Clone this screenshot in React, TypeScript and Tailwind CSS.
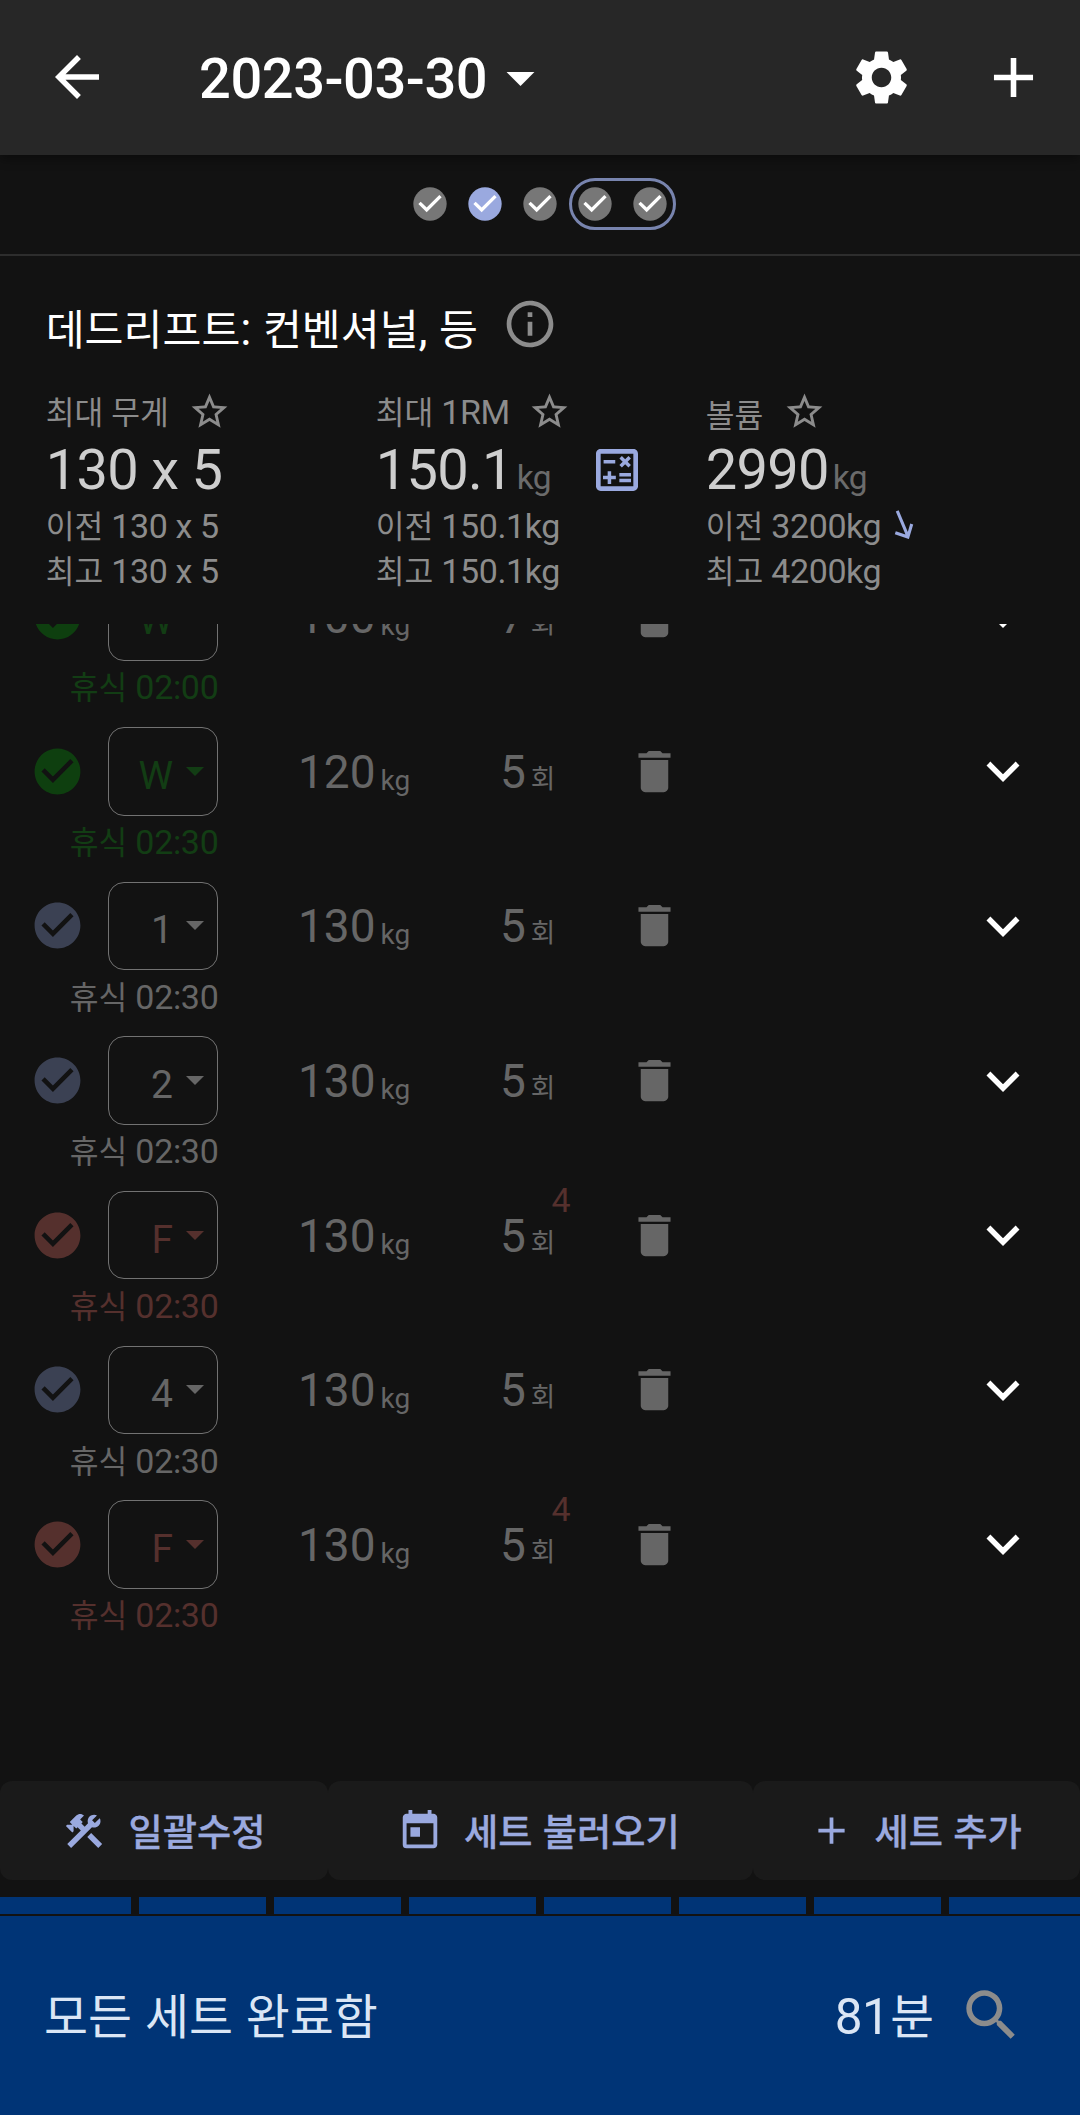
import React from "react";
import {
  MdAdd,
  MdArrowBack,
  MdArrowDropDown,
  MdCheckCircle,
  MdDelete,
  MdExpandMore,
  MdInfoOutline,
  MdOutlineCalculate,
  MdSearch,
  MdSettings,
  MdStarBorder,
  MdToday,
} from "react-icons/md";

/* Latin text is set in Roboto; Hangul runs use a slightly smaller Noto Sans. */
function T({ children }: { children: string }) {
  return (
    <>
      {children.split(/([\uac00-\ud7a3]+)/).map((part, i) =>
        i % 2 === 1 ? (
          <span
            key={i}
            className="font-['Noto_Sans_CJK_KR',sans-serif] text-[0.92em] leading-[0] tracking-normal"
          >
            {part}
          </span>
        ) : (
          part
        ),
      )}
    </>
  );
}

function Dot({ active = false }: { active?: boolean }) {
  return (
    <span
      className={
        active
          ? "flex size-10 items-center justify-center text-[#9aa9df]"
          : "flex size-10 items-center justify-center text-[#777777]"
      }
    >
      <svg viewBox="0 0 24 24" className="size-10">
        <circle cx="12" cy="12" r="10" fill="currentColor" />
        <path d="m10 17-5-5 1.41-1.41L10 14.17l7.59-7.59L19 8z" fill="#ffffff" />
      </svg>
    </span>
  );
}

function HammerWrench() {
  return (
    <svg viewBox="0 0 24 24" className="size-[44px]" fill="currentColor">
      <path d="M13.78 15.3L19.78 21.3L21.89 19.14L15.89 13.14L13.78 15.3M17.5 10.1C17.11 10.1 16.69 10.05 16.36 9.91L4.97 21.25L2.86 19.14L10.27 11.74L8.5 9.96L7.78 10.66L6.33 9.25V12.11L5.63 12.81L2.11 9.25L2.81 8.55H5.62L4.22 7.14L7.78 3.58C8.95 2.41 10.83 2.41 12 3.58L9.89 5.74L11.3 7.14L10.59 7.85L12.38 9.63L14.2 7.75C14.06 7.42 14 7 14 6.63C14 4.66 15.56 3.11 17.5 3.11C18.09 3.11 18.61 3.25 19.08 3.53L16.41 6.2L17.91 7.7L20.58 5.03C20.86 5.5 21 6 21 6.63C21 8.55 19.45 10.1 17.5 10.1Z" />
    </svg>
  );
}

function Header() {
  return (
    <header className="flex h-[154.5px] items-center bg-[#272727] pl-[44px] text-white shadow-[0_4px_10px_rgba(0,0,0,0.4)]">
      <MdArrowBack className="size-[66px]" />
      <button className="ml-[89px] flex items-center">
        <span className="pt-[3px] text-[56px] leading-[66px] font-medium tracking-[-0.45px]">
          2023-03-30
        </span>
        <MdArrowDropDown className="size-[67px]" />
      </button>
      <MdSettings className="ml-auto size-[65px]" />
      <MdAdd className="mr-[33px] ml-[66px] size-[67px]" />
    </header>
  );
}

interface StatProps {
  label: React.ReactNode;
  value: string;
  unit?: string;
  previous: string;
  best: string;
  icon?: React.ReactNode;
  trend?: React.ReactNode;
}

function Stat({ label, value, unit, previous, best, icon, trend }: StatProps) {
  return (
    <div className="w-[330px] text-[34px] tracking-[-0.4px] text-[#8c8c8c]">
      <div className="flex h-[60px] items-center">
        {label}
        <MdStarBorder className="mb-px ml-[19px] size-[43px]" />
      </div>
      <div className="flex h-[56px] items-center">
        <span className="text-[56px] leading-[55px] tracking-[-0.7px] text-[#cecece]">
          {value}
          {unit && (
            <span className="ml-[4px] text-[33.5px] leading-[0] text-[#6b6b6b]">{unit}</span>
          )}
        </span>
        {icon}
      </div>
      <div className="mt-[6px] flex h-[45px] items-center leading-[45px]">
        <span>
          <T>{previous}</T>
        </span>
        {trend}
      </div>
      <div className="h-[45px] leading-[45px]">
        <T>{best}</T>
      </div>
    </div>
  );
}

type Kind = "warmup" | "normal" | "failure";

interface WorkoutSet {
  tag: string;
  kind: Kind;
  weight: string;
  reps: string;
  rest: string;
  rir?: string;
}

const sets: WorkoutSet[] = [
  { tag: "W", kind: "warmup", weight: "100", reps: "7", rest: "02:00" },
  { tag: "W", kind: "warmup", weight: "120", reps: "5", rest: "02:30" },
  { tag: "1", kind: "normal", weight: "130", reps: "5", rest: "02:30" },
  { tag: "2", kind: "normal", weight: "130", reps: "5", rest: "02:30" },
  { tag: "F", kind: "failure", weight: "130", reps: "5", rest: "02:30", rir: "4" },
  { tag: "4", kind: "normal", weight: "130", reps: "5", rest: "02:30" },
  { tag: "F", kind: "failure", weight: "130", reps: "5", rest: "02:30", rir: "4" },
];

const circleColor: Record<Kind, string> = {
  warmup: "text-[#0e3f0f]",
  normal: "text-[#3b4153]",
  failure: "text-[#55302d]",
};

const labelColor: Record<Kind, string> = {
  warmup: "text-[#123d14]",
  normal: "text-[#666666]",
  failure: "text-[#55302d]",
};

function SetRow({ set }: { set: WorkoutSet }) {
  return (
    <div className="h-[154.65px] text-[#666666]">
      <div className="flex h-[88.5px] items-center pr-[44px] pl-[30px]">
        <MdCheckCircle className={`size-[55px] ${circleColor[set.kind]}`} />
        <div
          className={`ml-[23px] flex h-full w-[110px] items-center justify-end rounded-2xl border border-[#727272] pr-[13px] ${labelColor[set.kind]}`}
        >
          <span className="pt-[9px] text-[39px] leading-[46px]">{set.tag}</span>
          <svg viewBox="0 0 18 9" className="ml-[13px] h-[9px] w-[18px]" fill="currentColor">
            <path d="M0 0h18l-9 9z" />
          </svg>
        </div>
        <div className="ml-[80px] w-[202px] pt-[1px] text-[46px] leading-[54px]">
          {set.weight}
          <span className="relative top-[2px] ml-[5px] text-[28px] leading-[0]">kg</span>
        </div>
        <div className="relative w-[126.5px] pt-[1px] text-[46px] leading-[54px]">
          {set.reps}
          <span className="ml-[5px] text-[29px] leading-[0]">
            <T>회</T>
          </span>
          {set.rir && (
            <span className="absolute -top-[27.5px] left-[51.5px] text-[34px] leading-[40px] text-[#55302d]">
              {set.rir}
            </span>
          )}
        </div>
        <MdDelete className="size-[55px]" />
        <MdExpandMore className="ml-auto size-[66px] text-white" />
      </div>
      <div
        className={`mt-[5.5px] w-[218.5px] text-right text-[34px] leading-[42px] tracking-[-0.3px] ${labelColor[set.kind]}`}
      >
        <T>{`휴식 ${set.rest}`}</T>
      </div>
    </div>
  );
}

function TrendDown() {
  return (
    <svg
      viewBox="0 0 20 30"
      className="mb-[5px] ml-[13px] h-[29px] w-5 text-[#9aa9df]"
      fill="none"
      stroke="currentColor"
      strokeWidth="3.2"
    >
      <path d="M3 1l11 26M1 23.500l13 4.500 4-13.500" />
    </svg>
  );
}

export default function App() {
  return (
    <div className="flex h-[2115px] w-[1080px] flex-col overflow-hidden bg-[#121212] font-['Roboto',sans-serif]">
      <Header />

      <div className="flex h-[101.500px] items-center justify-center gap-[15px] border-b-2 border-[#2d2d2d] pb-[1px] pl-[5px]">
        <Dot />
        <Dot active />
        <Dot />
        <div className="-ml-[6px] flex h-[52px] items-center gap-[15px] rounded-full border-3 border-[#7884ae] px-[3px]">
          <Dot />
          <Dot />
        </div>
      </div>

      <section className="h-[368px] pl-[45.7px]">
        <div className="flex h-[126px] items-center pt-[9px]">
          <h1 className="pt-[11px] text-[46px] leading-[54px] text-white">
            <T>데드리프트: 컨벤셔널, 등</T>
          </h1>
          <MdInfoOutline className="ml-[24px] size-[56px] text-[#8c8c8c]" />
        </div>
        <div className="flex">
          <Stat
            label={
              <span>
                <T>최대 무게</T>
              </span>
            }
            value="130 x 5"
            previous="이전 130 x 5"
            best="최고 130 x 5"
          />
          <Stat
            label={
              <span className="-mr-px">
                <T>최대 1RM</T>
              </span>
            }
            value="150.1"
            unit="kg"
            previous="이전 150.1kg"
            best="최고 150.1kg"
            icon={<MdOutlineCalculate className="ml-[38px] size-[56px] text-[#9aa9df]" />}
          />
          <Stat
            label={
              <span className="mr-px pt-[6px]">
                <T>볼륨</T>
              </span>
            }
            value="2990"
            unit="kg"
            previous="이전 3200kg"
            best="최고 4200kg"
            trend={<TrendDown />}
          />
        </div>
      </section>

      <section className="h-[1157px] overflow-hidden">
        <div className="-mt-[51.65px]">
          {sets.map((set, i) => (
            <SetRow key={i} set={set} />
          ))}
        </div>
      </section>

      <nav className="grid h-[99px] grid-cols-[327.5px_425px_1fr] text-[40.5px] font-medium text-[#9aa9df]">
        <button className="flex items-center rounded-xl bg-[#1a1a1a] pl-[61.500px]">
          <HammerWrench />
          <span className="ml-[23px] pt-[4px] [-webkit-text-stroke:0.3px_#9aa9df]">
            <T>일괄수정</T>
          </span>
        </button>
        <button className="flex items-center rounded-xl bg-[#1a1a1a] pl-[69px]">
          <MdToday className="size-[46px]" />
          <span className="ml-[21.5px] pt-[4px] [-webkit-text-stroke:0.3px_#9aa9df]">
            <T>세트 불러오기</T>
          </span>
        </button>
        <button className="flex items-center rounded-xl bg-[#1a1a1a] pl-[56px]">
          <MdAdd className="size-[45px]" />
          <span className="ml-[21px] pt-[4px] [-webkit-text-stroke:0.3px_#9aa9df]">
            <T>세트 추가</T>
          </span>
        </button>
      </nav>

      <div className="mt-[17px] grid h-[16.5px] grid-cols-8">
        {Array.from({ length: 8 }, (_, i) => (
          <span
            key={i}
            className="border-x-4 border-[#121212] bg-[#003476] first:border-l-0 last:border-r-0"
          />
        ))}
      </div>

      <footer className="mt-[2.5px] flex h-[199px] items-center bg-[#003476] pr-[55.500px] pl-[44px] text-[52px] leading-[60px] text-[#dbe6f5]">
        <span className="pt-[2.5px]">
          <T>모든 세트 완료함</T>
        </span>
        <span className="ml-auto pt-[2.5px] text-[49.5px] tracking-[-0.5px]">
          81
          <span className="ml-px font-['Noto_Sans_CJK_KR',sans-serif] text-[47.5px] leading-[0] tracking-normal">
            분
          </span>
        </span>
        <MdSearch className="ml-[24px] size-[66.500px] text-[#8c8c8c]" />
      </footer>
    </div>
  );
}
